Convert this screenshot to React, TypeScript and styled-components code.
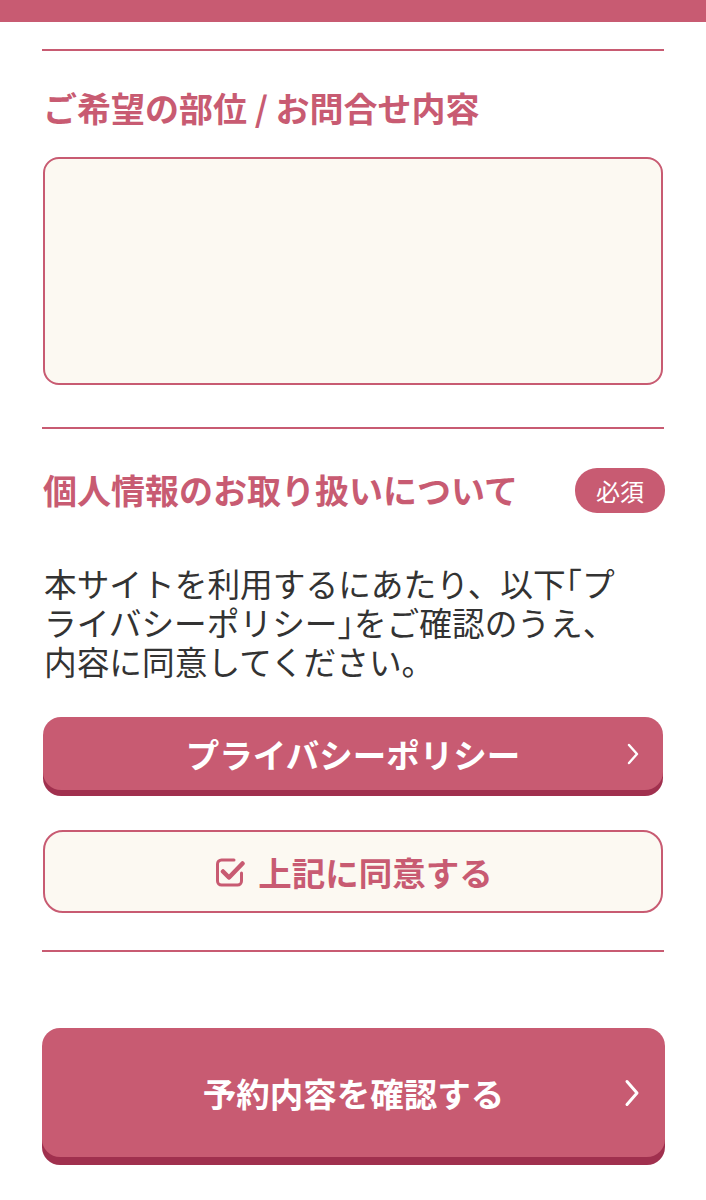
import React from "react";
import styled, { createGlobalStyle } from "styled-components";

const PINK = "#c85b72";
const DARK = "#a0304e";
const CREAM = "#fcf9f2";

const Global = createGlobalStyle`
  html, body { margin: 0; padding: 0; background: #fff; }
  body { font-family: "Noto Sans CJK JP", "Noto Sans", sans-serif; }
  * { box-sizing: border-box; }
`;

const TopBar = styled.div`
  height: 22px;
  background: ${PINK};
`;

const Page = styled.main`
  display: flex;
  flex-direction: column;
  padding: 0 42px 40px 42px;
`;

const Divider = styled.hr<{ $mt: number }>`
  margin: ${(p) => p.$mt}px 0 0 0;
  border: none;
  height: 2px;
  background: ${PINK};
  width: 622px;
`;

const Heading = styled.h2<{ $mt?: number }>`
  margin: ${(p) => p.$mt ?? 0}px 0 0 1px;
  font-size: 34px;
  line-height: 40px;
  font-weight: 700;
  color: ${PINK};
`;

const TextArea = styled.textarea`
  margin: 29px 0 0 1px;
  width: 620px;
  height: 228px;
  border: 2px solid ${PINK};
  border-radius: 16px;
  background: ${CREAM};
  resize: none;
  outline: none;
  font-family: inherit;
`;

const HeadRow = styled.div`
  margin-top: 38px;
  display: flex;
  align-items: center;
  justify-content: space-between;
  width: 623px;
  height: 46px;
`;

const Badge = styled.span`
  display: inline-flex;
  align-items: center;
  justify-content: center;
  width: 90px;
  height: 45px;
  border-radius: 22px;
  background: ${PINK};
  color: #fff;
  font-size: 24px;
  font-weight: 400;
`;

const Paragraph = styled.p`
  margin: 50px 0 0 2px;
  width: 620px;
  font-size: 32.7px;
  line-height: 39px;
  color: #333;
  font-weight: 400;
`;

const Bracket = styled.span`
  font-feature-settings: "halt";
`;

const PrimaryButton = styled.button<{ $mt: number; $h: number; $shadow: number; $wide?: boolean }>`
  position: relative;
  margin-top: ${(p) => p.$mt}px;
  margin-left: ${(p) => (p.$wide ? 0 : 1)}px;
  width: ${(p) => (p.$wide ? 623 : 620)}px;
  height: ${(p) => p.$h}px;
  border: none;
  border-radius: 18px;
  background: ${PINK};
  box-shadow: 0 ${(p) => p.$shadow}px 0 ${DARK};
  color: #fff;
  font-family: inherit;
  font-size: 33.5px;
  font-weight: 700;
  display: flex;
  align-items: center;
  justify-content: center;
  padding: 0;
  cursor: pointer;
`;

const Chevron = styled.svg<{ $right: number }>`
  position: absolute;
  right: ${(p) => p.$right}px;
  top: 50%;
  transform: translateY(-50%);
`;

const AgreeButton = styled.button`
  margin: 40px 0 0 1px;
  width: 620px;
  height: 83px;
  border: 2px solid ${PINK};
  border-radius: 20px;
  background: ${CREAM};
  color: ${PINK};
  font-family: inherit;
  font-size: 33.5px;
  font-weight: 700;
  display: flex;
  align-items: center;
  justify-content: center;
  gap: 13px;
  padding: 0 0 0 2px;
  cursor: pointer;
`;

const CheckIcon = () => (
  <svg width="30" height="30" viewBox="0 0 30 30" fill="none">
    <path
      d="M19 3H6.5A4 4 0 0 0 2.5 7v17a4 4 0 0 0 4 4h16a4 4 0 0 0 4-4v-8"
      stroke={PINK}
      strokeWidth="3"
      strokeLinecap="round"
    />
    <path
      d="M8 14.5l6 6L27.5 6.5"
      stroke={PINK}
      strokeWidth="4.5"
      strokeLinecap="round"
      strokeLinejoin="round"
    />
  </svg>
);

export default function App() {
  return (
    <>
      <Global />
      <TopBar />
      <Page>
        <Divider $mt={27} />
        <Heading $mt={37}>ご希望の部位 / お問合せ内容</Heading>
        <TextArea />
        <Divider $mt={42} />
        <HeadRow>
          <Heading>個人情報のお取り扱いについて</Heading>
          <Badge>必須</Badge>
        </HeadRow>
        <Paragraph>
          本サイトを利用するにあたり、以下<Bracket>「</Bracket>プ
          <br />
          ライバシーポリシー<Bracket>」</Bracket>をご確認のうえ、
          <br />
          内容に同意してください。
        </Paragraph>
        <PrimaryButton $mt={37} $h={73} $shadow={6}>
          プライバシーポリシー
          <Chevron $right={23} width="14" height="22" viewBox="0 0 14 22">
            <path d="M3 2l8 9-8 9" stroke="#fff" strokeWidth="2.4" fill="none" strokeLinecap="round" strokeLinejoin="round" />
          </Chevron>
        </PrimaryButton>
        <AgreeButton>
          <CheckIcon />
          上記に同意する
        </AgreeButton>
        <Divider $mt={37} />
        <PrimaryButton $mt={76} $h={129} $shadow={8} $wide>
          予約内容を確認する
          <Chevron $right={24} width="18" height="28" viewBox="0 0 18 28">
            <path d="M4 2.5l10 11.5-10 11.5" stroke="#fff" strokeWidth="3" fill="none" strokeLinecap="round" strokeLinejoin="round" />
          </Chevron>
        </PrimaryButton>
      </Page>
    </>
  );
}
